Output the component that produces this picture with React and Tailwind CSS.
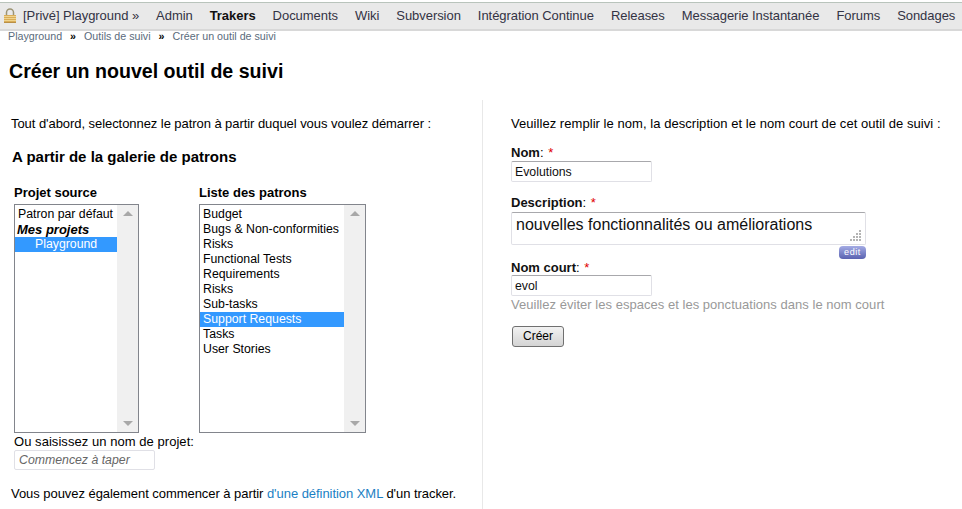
const navItems = ['Admin', 'Trakers', 'Documents', 'Wiki', 'Subversion', 'Intégration Continue', 'Releases', 'Messagerie Instantanée', 'Forums', 'Sondages'];

const projects = [
  { label: 'Patron par défaut' },
  { label: 'Mes projets', group: true },
  { label: 'Playground', selected: true, indent: true },
];

const templates = ['Budget', 'Bugs & Non-conformities', 'Risks', 'Functional Tests', 'Requirements', 'Risks', 'Sub-tasks', 'Support Requests', 'Tasks', 'User Stories'];

const LockIcon = () => (
  <svg width="14" height="16" viewBox="0 0 14 16" className="shrink-0">
    <path d="M3.5 8V4.5a3.5 3.5 0 0 1 7 0V8" fill="none" stroke="#9c9474" strokeWidth="1.5" />
    <rect x="1" y="7" width="12" height="8" fill="#d9ad58" />
    <path d="M1 8.5h12M1 10.5h12M1 12.5h12" stroke="#f0d48e" strokeWidth="1" />
    <path d="M1 14.5h12" stroke="#b98f45" strokeWidth="1" />
  </svg>
);

const ListBox = ({ width, children }) => (
  <div className={`${width} h-[229px] flex border border-[#82858c] bg-white`}>
    <div className="flex-1 min-w-0 pt-[2px]">{children}</div>
    <div className="w-[21px] flex flex-col justify-between items-center bg-[#f0f0f0] py-[6px]">
      <span className="w-0 h-0 border-x-[5px] border-x-transparent border-b-[5px] border-b-[#a8a8a8]"></span>
      <span className="w-0 h-0 border-x-[5px] border-x-transparent border-t-[5px] border-t-[#a8a8a8]"></span>
    </div>
  </div>
);

const Required = ({ label }) => (
  <label className="block h-[15px] leading-[15px] text-[13px] text-black">
    <span className="font-bold text-[#111]">{label}</span>: <span className="ml-px text-[#e00000]">*</span>
  </label>
);

const TextValue = ({ value }) => (
  <div className="w-[141px] h-[21px] px-[3px] border border-[#e0e0e6] border-t-[#a8a8ac] rounded-[2px] text-[12.3px] leading-[20px] text-[#111]">
    {value}
  </div>
);

export default function App() {
  return (
    <div className="w-[962px] h-[509px] overflow-hidden bg-white font-['Liberation_Sans',Arial,sans-serif] text-[13px] text-black">
      {/* Top bar */}
      <nav className="h-[29px] mt-[2px] flex items-center gap-[17px] pl-[3px] whitespace-nowrap bg-[#e9e9e9] border-t border-t-[#b9c4bc] border-b-2 border-b-[#d8d8d8] text-[13px] tracking-[-0.05px] text-[#333344]">
        <div className="flex items-center gap-[6px]">
          <LockIcon />
          <span>[Privé] Playground »</span>
        </div>
        {navItems.map((item) => (
          <span key={item} className={item === 'Trakers' ? 'font-bold text-[#111]' : ''}>{item}</span>
        ))}
      </nav>

      {/* Breadcrumbs */}
      <div className="h-[11px] pl-2 flex items-center gap-[8px] text-[10.7px] text-[#5a6b7c]">
        <span>Playground</span>
        <span className="font-bold text-black">»</span>
        <span>Outils de suivi</span>
        <span className="font-bold text-black">»</span>
        <span>Créer un outil de suivi</span>
      </div>

      <h1 className="mt-[17px] ml-[9px] h-[24px] leading-[24px] text-[19.6px] font-bold text-black">Créer un nouvel outil de suivi</h1>

      <div className="mt-[17px] flex h-[409px]">
        {/* Left panel */}
        <div className="w-[483px] border-r border-r-[#e8e8e8] pl-[11px] pt-[16px]">
          <p className="h-[15px] leading-[15px] tracking-[-0.06px]">Tout d'abord, selectonnez le patron à partir duquel vous voulez démarrer :</p>
          <h2 className="mt-[17px] h-[17px] leading-[17px] ml-px text-[15px] font-bold">A partir de la galerie de patrons</h2>

          <div className="mt-[20px] ml-[3px] flex gap-[60px]">
            <div>
              <div className="h-[16px] leading-[16px] text-[13px] font-bold">Projet source</div>
              <div className="mt-[3px]">
                <ListBox width="w-[125px]">
                  {projects.map((p) => (
                    <div
                      key={p.label}
                      className={`h-[15px] leading-[15px] ${p.group ? 'pl-[2px] text-[13px] font-bold italic' : 'pl-[3px] text-[12.3px]'} ${p.indent ? 'pl-[20px]' : ''} ${p.selected ? 'bg-[#3399ff] text-white' : ''}`}
                    >
                      {p.label}
                    </div>
                  ))}
                </ListBox>
              </div>
            </div>
            <div>
              <div className="h-[16px] leading-[16px] text-[13px] font-bold">Liste des patrons</div>
              <div className="mt-[3px]">
                <ListBox width="w-[167px]">
                  {templates.map((t, i) => (
                    <div
                      key={i}
                      className={`h-[15px] leading-[15px] pl-[3px] text-[12.3px] ${t === 'Support Requests' ? 'bg-[#3399ff] text-white' : ''}`}
                    >
                      {t}
                    </div>
                  ))}
                </ListBox>
              </div>
            </div>
          </div>

          <div className="ml-[3px] mt-px h-[15px] leading-[15px] tracking-[0.05px]">Ou saisissez un nom de projet:</div>
          <div className="ml-[3px] mt-[1px] w-[141px] h-[20px] px-1 border border-[#e0e0e6] rounded-[2px] text-[12.3px] italic leading-[18px] text-[#666]">
            Commencez à taper
          </div>
          <p className="mt-[16px] h-[15px] leading-[15px] tracking-[-0.05px]">
            Vous pouvez également commencer à partir <span className="text-[#1b7fc4]">d'une définition XML</span> d'un tracker.
          </p>
        </div>

        {/* Right panel */}
        <div className="flex-1 pl-[28px] pt-[16px]">
          <p className="h-[15px] leading-[15px] whitespace-nowrap tracking-[0.05px]">Veuillez remplir le nom, la description et le nom court de cet outil de suivi :</p>

          <div className="mt-[14px]"><Required label="Nom" /></div>
          <div className="mt-px"><TextValue value="Evolutions" /></div>

          <div className="mt-[13px]"><Required label="Description" /></div>
          <div className="relative mt-[2px] w-[355px] h-[33px] px-1 border border-[#e0e0e6] border-t-[#a8a8ac] rounded-[2px] text-[16px] leading-[24px] text-[#111]">
            nouvelles fonctionnalités ou améliorations
            <svg width="11" height="11" viewBox="0 0 11 11" className="absolute right-[4px] bottom-[3px]">
              <path d="M9 0h2v2H9zM6 3h2v2H6zM9 3h2v2H9zM3 6h2v2H3zM6 6h2v2H6zM9 6h2v2H9zM0 9h2v2H0zM3 9h2v2H3zM6 9h2v2H6zM9 9h2v2H9z" fill="#b4b4b4" />
            </svg>
          </div>
          <div className="flex justify-end w-[355px] mt-px">
            <span className="w-[27px] h-[13px] rounded-[4px] bg-gradient-to-b from-[#a4abe4] to-[#5a62b0] text-white text-[9px] leading-[13px] text-center tracking-[0.6px]">edit</span>
          </div>

          <div className="mt-[1px]"><Required label="Nom court" /></div>
          <TextValue value="evol" />
          <p className="mt-[1px] h-[16px] leading-[16px] text-[#999] tracking-[0.03px]">Veuillez éviter les espaces et les ponctuations dans le nom court</p>

          <button className="block mt-[13px] ml-px w-[52px] h-[21px] rounded-[3px] border border-[#707070] bg-gradient-to-b from-[#f2f2f2] to-[#d4d4d4] text-[12px] leading-[19px] text-black">Créer</button>
        </div>
      </div>
    </div>
  );
}
